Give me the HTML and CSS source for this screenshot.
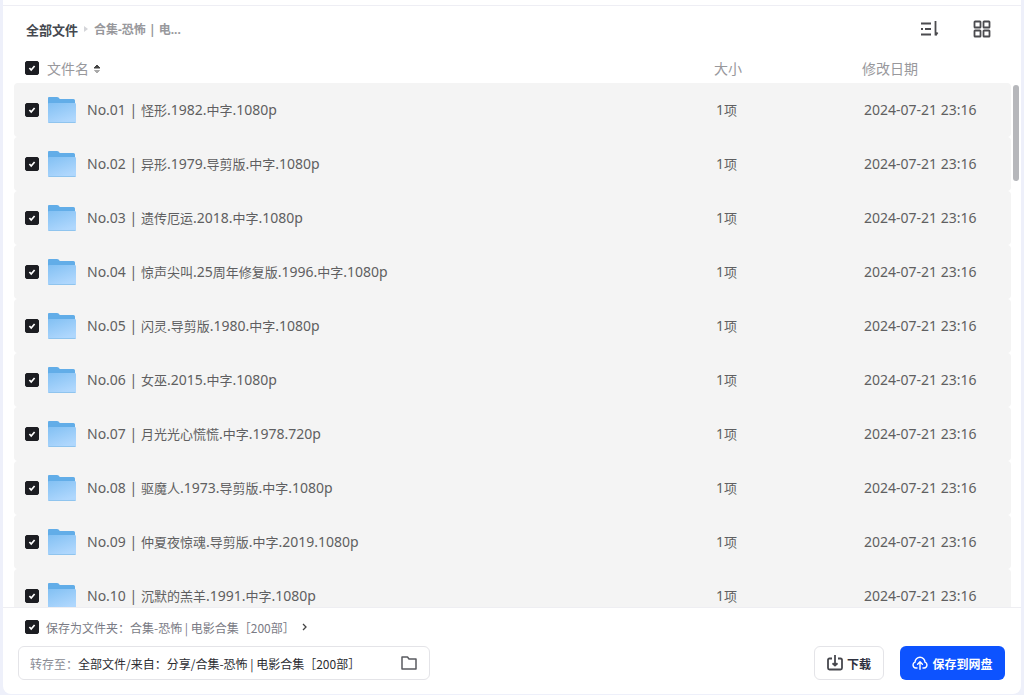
FILE: index.html
```html
<!DOCTYPE html>
<html lang="zh-CN">
<head>
  <meta charset="UTF-8" />
  <meta name="viewport" content="width=device-width, initial-scale=1" />
  <title>全部文件</title>
  <link rel="stylesheet" href="styles.css">
</head>
<body>

  <!-- Icons used more than once -->
  <svg class="defs" width="0" height="0" aria-hidden="true">
    <linearGradient id="front" x1="0" y1="0" x2="0.5" y2="1">
      <stop offset="0" stop-color="#82c0f3" />
      <stop offset="1" stop-color="#afd7fd" />
    </linearGradient>
    <symbol id="folder" viewBox="0 0 28 26">
      <path d="M0 1Q0 0 1 0H9Q10 0 10.6 .6L11.8 2H25.5Q27 2 27 3.5V12H0Z" fill="#62ade8" />
      <path d="M0 6.6Q0 6 1 6H26.5Q28 6 28 7.2V24.8Q28 26 26.8 26H1.2Q0 26 0 24.8Z" fill="url(#front)" />
      <path d="M.5 25.5H27.5" stroke="#8fc4ee" stroke-width="1" />
    </symbol>
  </svg>

  <main class="panel">
    <div class="toolbar">
      <nav class="breadcrumb">
        <a href="#" class="root">全部文件</a>
        <svg width="4" height="6" viewBox="0 0 4 6"><path d="M0 0L4 3L0 6Z" fill="#d4d5d9" /></svg>
        <a href="#" class="current">合集-恐怖 | 电...</a>
      </nav>
      <div class="view-actions">
        <button class="icon-btn" aria-label="排序">
          <svg width="20" height="18" viewBox="0 0 20 18" fill="none" stroke="#4b4b4f" stroke-width="1.8">
            <path d="M2 3.5H12M2 9H4M6 9H12M2 14.5H12M16.5 1V15.5M16.5 15.5L18.6 12.5" />
          </svg>
        </button>
        <button class="icon-btn" aria-label="网格视图">
          <svg width="18" height="18" viewBox="0 0 18 18" fill="none" stroke="#4b4b4f" stroke-width="1.8">
            <rect x="1.5" y="1.5" width="6" height="6" rx=".6" />
            <rect x="10.5" y="1.5" width="6" height="6" rx=".6" />
            <rect x="1.5" y="10.5" width="6" height="6" rx=".6" />
            <rect x="10.5" y="10.5" width="6" height="6" rx=".6" />
          </svg>
        </button>
      </div>
    </div>

    <div class="list">
      <table>
        <thead>
          <tr>
            <th class="col-check"><input type="checkbox" aria-label="全选" checked></th>
            <th class="col-name" colspan="2">文件名<svg class="sort" width="8" height="10" viewBox="0 0 8 10"><path d="M1 4L4 1L7 4Z" fill="#444" stroke="#444" stroke-linejoin="round" /><path d="M1.5 6.5L4 9L6.5 6.5Z" fill="#aaa" stroke="#aaa" stroke-linejoin="round" /></svg></th>
            <th class="col-size">大小</th>
            <th class="col-date">修改日期</th>
          </tr>
        </thead>
        <tbody id="files"></tbody>
      </table>
      <div class="scrollbar"><div class="thumb"></div></div>
    </div>

    <footer>
      <div class="save-as">
        <input type="checkbox" id="save-folder" checked>
        <label for="save-folder">保存为文件夹：合集-恐怖 | 电影合集［200部］</label>
        <svg width="5" height="8" viewBox="0 0 5 8" fill="none" stroke="#444" stroke-width="1.3"><path d="M1 1L4 4L1 7" /></svg>
      </div>
      <div class="actions">
        <button class="target">
          <span class="hint">转存至：</span>
          <span class="path">全部文件/来自：分享/合集-恐怖 | 电影合集［200部］</span>
          <svg width="16" height="14" viewBox="0 0 16 14" fill="none" stroke="#5a5b60" stroke-width="1.5" stroke-linejoin="round">
            <path d="M1 1H6.5L8 3H15V13H1Z" />
          </svg>
        </button>
        <button class="btn download">
          <svg width="16" height="16" viewBox="0 0 16 16" fill="none" stroke="#46474d" stroke-width="1.8" stroke-linejoin="round">
            <path d="M5 3.5H2.5Q1 3.5 1 5V13Q1 14.5 2.5 14.5H13.5Q15 14.5 15 13V5Q15 3.5 13.5 3.5H11M8 0V10.5M5.5 8.3L8 10.5L10.5 8.3" />
          </svg>
          下载
        </button>
        <button class="btn save">
          <svg width="16" height="14" viewBox="0 0 16 14" fill="none" stroke="#fff" stroke-width="1.4" stroke-linecap="round" stroke-linejoin="round">
            <path d="M5 12H3.8A3 3 0 0 1 3 6.2A5 5 0 0 1 13 6.2A3 3 0 0 1 12.2 12H11M8 13.3V6M5.6 8.2L8 5.8L10.4 8.2" />
          </svg>
          保存到网盘
        </button>
      </div>
    </footer>
  </main>

  <script src="script.js"></script>
</body>
</html>
```
FILE: styles.css
```css
* {
  box-sizing: border-box;
}
body {
  margin: 0;
  height: 100vh;
  padding: 0 3px 1px;
  background: #eef0fa;
  color: #5f5f61;
  font-family: "Noto Sans", "Noto Sans CJK SC", sans-serif;
  font-size: 14px;
}
.defs {
  position: absolute;
}
button {
  font: inherit;
  border: none;
  background: none;
  padding: 0;
  cursor: pointer;
}
a {
  color: inherit;
  text-decoration: none;
}
svg {
  flex: none;
}
.panel {
  display: flex;
  flex-direction: column;
  height: 100%;
  background: #fff;
  border-radius: 0 0 8px 8px;
  overflow: hidden;
}

/* Toolbar */
.toolbar {
  display: flex;
  flex: none;
  justify-content: space-between;
  align-items: center;
  height: 49px;
  margin-top: 5px;
  padding: 0 30px 2px 23px;
  border-top: 1px solid #eeeef4;
}
.breadcrumb {
  display: flex;
  align-items: center;
  gap: 6px;
  font-weight: 700;
}
.breadcrumb .root {
  color: #45484f;
  font-size: 13px;
}
.breadcrumb .current {
  color: #98989c;
  font-size: 12px;
}
.view-actions {
  display: flex;
  gap: 34px;
}
.icon-btn {
  display: flex;
  align-items: center;
}

/* Checkbox */
input[type="checkbox"] {
  appearance: none;
  display: block;
  flex: none;
  width: 14px;
  height: 14px;
  margin: 0;
  border-radius: 2px;
  background: #fff;
  border: 1px solid #1c1d22;
}
input[type="checkbox"]:checked {
  background: #1c1d22 url("data:image/svg+xml,%3Csvg xmlns='http://www.w3.org/2000/svg' viewBox='0 0 12 12'%3E%3Cpath d='M3.4 6L5.2 8L8.6 4' fill='none' stroke='white' stroke-width='1.7'/%3E%3C/svg%3E") center / 12px no-repeat;
}

/* File list */
.list {
  display: flex;
  flex: 1;
  min-height: 0;
  overflow: hidden;
  padding-left: 11px;
}
table {
  flex: 1;
  align-self: flex-start;
  table-layout: fixed;
  border-collapse: separate;
  border-spacing: 0;
}
th, td {
  padding: 0 0 2px;
  text-align: left;
  font-weight: 400;
  white-space: nowrap;
}
th {
  height: 29px;
  color: #98989c;
}
td {
  height: 54px;
  background: #f4f4f4;
}
td:first-child {
  border-radius: 4px 0 0 4px;
}
td:last-child {
  border-radius: 0 4px 4px 0;
}
.col-check {
  width: 33px;
  padding-left: 11px;
}
td.col-check, td.folder {
  padding-bottom: 0;
}
.folder {
  width: 40px;
}
.folder svg {
  display: block;
  margin-left: 1px;
}
.sort {
  margin-left: 4px;
}
.zh {
  font-size: 13px;
}
.col-size {
  width: 148px;
}
.col-date {
  width: 149px;
}
td.col-size, td.col-date {
  padding-left: 2px;
}
.scrollbar {
  width: 6px;
  margin: 31px 2px 0;
}
.thumb {
  height: 96px;
  border-radius: 3px;
  background: #b6b7bb;
}

/* Footer */
footer {
  flex: none;
  padding: 9px 16px 14px 15px;
  border-top: 1px solid #eeeef2;
  font-family: "Noto Sans CJK SC", sans-serif;
  font-size: 12px;
}
.save-as {
  display: flex;
  align-items: center;
  gap: 7px;
  height: 20px;
  margin-bottom: 9px;
  padding-left: 7px;
  color: #7a7b85;
}
.actions {
  display: flex;
  align-items: stretch;
  height: 34px;
  gap: 16px;
}
.target {
  display: flex;
  align-items: center;
  width: 412px;
  margin-right: auto;
  padding: 0 12px 0 11px;
  border: 1px solid #e4e4e8;
  border-radius: 6px;
  text-align: left;
}
.target .hint {
  color: #8a8b94;
}
.target .path {
  flex: 1;
  color: #2c2d32;
}
.btn {
  display: flex;
  align-items: center;
  justify-content: center;
  gap: 4px;
  border-radius: 6px;
  font-weight: 700;
}
.download {
  width: 70px;
  border: 1px solid #e4e4e8;
  color: #2f3140;
}
.save {
  width: 105px;
  background: #0d53ff;
  color: #fff;
}
```
FILE: script.js
```js
const files = [
  'No.01 | 怪形.1982.中字.1080p',
  'No.02 | 异形.1979.导剪版.中字.1080p',
  'No.03 | 遗传厄运.2018.中字.1080p',
  'No.04 | 惊声尖叫.25周年修复版.1996.中字.1080p',
  'No.05 | 闪灵.导剪版.1980.中字.1080p',
  'No.06 | 女巫.2015.中字.1080p',
  'No.07 | 月光光心慌慌.中字.1978.720p',
  'No.08 | 驱魔人.1973.导剪版.中字.1080p',
  'No.09 | 仲夏夜惊魂.导剪版.中字.2019.1080p',
  'No.10 | 沉默的羔羊.1991.中字.1080p'
];

// Chinese runs are set one size smaller than the Latin text
const wrapZh = text => text.replace(/[\u4e00-\u9fff]+/g, '<span class="zh">$&</span>');

document.getElementById('files').innerHTML = files.map((name, i) => `
  <tr>
    <td class="col-check"><input type="checkbox" id="file-${i}" checked></td>
    <td class="folder"><svg width="28" height="26"><use href="#folder" /></svg></td>
    <td><label for="file-${i}">${wrapZh(name)}</label></td>
    <td class="col-size">${wrapZh('1项')}</td>
    <td class="col-date">2024-07-21 23:16</td>
  </tr>`).join('');
```
